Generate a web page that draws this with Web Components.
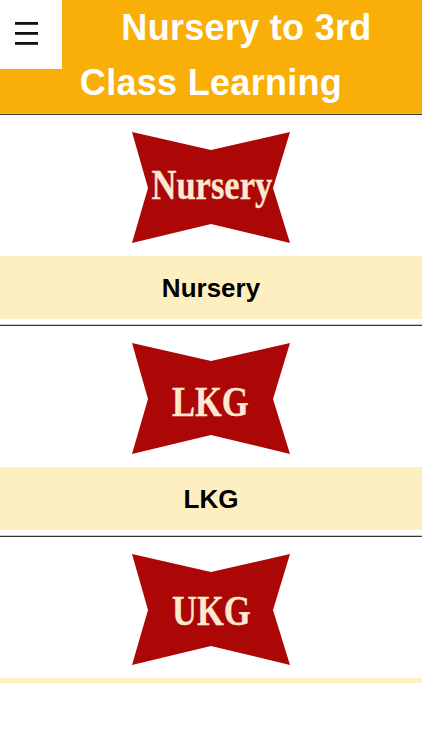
<!DOCTYPE html>
<html><head><meta charset="utf-8"><style>
html,body{margin:0;padding:0;background:#fff;font-family:"Liberation Sans",Arial,sans-serif}
</style></head><body>
<app-page>
<app-header><menu-button slot="menu"></menu-button>Nursery to 3rd<br>Class Learning</app-header>
<class-card label="Nursery" logo="Nursery"></class-card>
<class-card label="LKG" logo="LKG"></class-card>
<class-card label="" logo="UKG" last></class-card>
</app-page>
<script>
class AppPage extends HTMLElement{constructor(){super();this.attachShadow({mode:'open'}).innerHTML=`<style>:host{display:block;width:422px;height:750px;overflow:hidden;background:#fff}</style><slot></slot>`}}
class AppHeader extends HTMLElement{constructor(){super();this.attachShadow({mode:'open'}).innerHTML=`<style>
:host{display:block;position:relative;background:#faae08;color:#fff;height:114px;border-bottom:1px solid #3f3d38;box-shadow:inset 0 -1px 0 #c9b98f}
h1{margin:0;font:bold 36px/55px "Liberation Sans",Arial,sans-serif;text-align:center;text-indent:71px;letter-spacing:.3px;white-space:nowrap}
.m{position:absolute;left:0;top:0}
</style><div class="m"><slot name="menu"></slot></div><h1><slot></slot></h1>`}}
class MenuButton extends HTMLElement{constructor(){super();this.attachShadow({mode:'open'}).innerHTML=`<style>
:host{display:block;width:62px;height:69px;background:#fff}
svg{display:block}
</style><svg width="62" height="69" viewBox="0 0 62 69"><rect x="15" y="22" width="23" height="2.8" fill="#111"/><rect x="15" y="32" width="23" height="2.8" fill="#111"/><rect x="15" y="42" width="23" height="2.8" fill="#111"/></svg>`}}
const LOGO_TEXT={Nursery:{x:19.5,y:67},LKG:{x:40,y:72.5},UKG:{x:40,y:71}};
class ClassLogo extends HTMLElement{constructor(){super();const t=this.getAttribute('text');const p=LOGO_TEXT[t];this.attachShadow({mode:'open'}).innerHTML=`<style>:host{display:block;width:158px;height:111px}svg{display:block}text{font-family:"Liberation Serif","Times New Roman",serif;font-weight:bold;fill:#fde8d2;stroke:#fde8d2;stroke-width:.25px}</style>
<svg width="158" height="111" viewBox="0 0 158 111"><polygon points="0,0 79,18 158,0 141,56 158,111 79,92 0,111 16,56" fill="#ab0707"/>
<text transform="translate(${p.x},${p.y}) scale(1,1.25)" font-size="34.5">${t}</text></svg>`}}
class ClassCard extends HTMLElement{constructor(){super();const l=this.getAttribute('label');const last=this.hasAttribute('last');this.attachShadow({mode:'open'}).innerHTML=`<style>
:host{display:block}
.logo{display:flex;justify-content:center;padding:17px 0 13px}
.band{background:#fdefbf;height:${l?63:5}px;padding-top:${l?1:0}px;box-sizing:border-box;display:flex;align-items:center;justify-content:center;font:bold 26px "Liberation Sans",Arial,sans-serif;color:#000}
.rule{height:1px;background:#333;border-top:1px solid #c8c8c8;margin-top:5px}
</style><div class="logo"><class-logo text="${this.getAttribute('logo')}"></class-logo></div><div class="band">${l}</div>${last?'':'<div class="rule"></div>'}`}}
customElements.define('app-page',AppPage);
customElements.define('menu-button',MenuButton);
customElements.define('app-header',AppHeader);
customElements.define('class-logo',ClassLogo);
customElements.define('class-card',ClassCard);
</script>
</body></html>
